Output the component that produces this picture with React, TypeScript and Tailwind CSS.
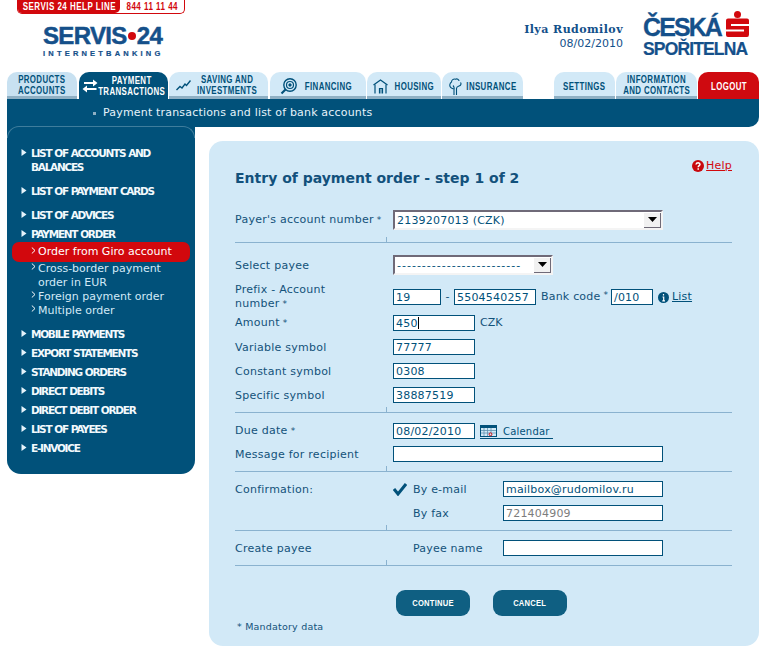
import React from "react";

const FONT = "font-['DejaVu_Sans',Verdana,sans-serif]";
const LOGO = "font-['Liberation_Sans',Arial,sans-serif]";

function Narrow({ w, children, className = "" }: { w: string; children: React.ReactNode; className?: string }) {
  return (
    <span className={`${w} flex justify-center shrink-0`}>
      <span className={`inline-block shrink-0 whitespace-nowrap scale-x-[0.75] ${LOGO} font-bold text-[10.5px] leading-[11px] tracking-[0.5px] text-center ${className}`}>{children}</span>
    </span>
  );
}

function Tab({ w, ml, pl, tw, children, active, red, light, icon, gap, single }: { w: string; ml?: string; pl?: string; tw: string; children: React.ReactNode; active?: boolean; red?: boolean; light?: boolean; icon?: React.ReactNode; gap?: string; single?: boolean }) {
  const bg = active
    ? "bg-[#01517a] text-white"
    : red
      ? "bg-[#cf0a10] text-white pt-[2px]"
      : `${light ? "bg-[#c8e1f1]" : "bg-[#d2e9f7]"} text-[#01517a] border-b-[3px] border-[#8fb0c4] ${single ? "pt-[4px]" : "pt-[2px]"}`;
  return (
    <div className={`${w} ${ml ?? ""} ${pl ?? ""} ${gap ?? ""} ${bg} h-[27px] rounded-t-[10px] flex items-center ${icon ? "" : "justify-center"} shrink-0`}>
      {icon}
      <Narrow w={tw}>{children}</Narrow>
    </div>
  );
}

const Arrow = () => (
  <svg width="6" height="7" viewBox="0 0 6 7" className="shrink-0 mt-[3px]"><path d="M0.5 0 L5.5 3.5 L0.5 7Z" fill="#e6f3fb" /></svg>
);

function MainItem({ children, mb = "mb-[5px]" }: { children: React.ReactNode; mb?: string }) {
  return (
    <div className={`flex gap-[4px] pl-[14px] ${mb}`}>
      <Arrow />
      <span className="text-[10.5px] leading-[14px] font-bold tracking-[-1.25px] [word-spacing:0.5px] text-[#f2f9fd] w-[145px]">{children}</span>
    </div>
  );
}

function SubItem({ children, active }: { children: React.ReactNode; active?: boolean }) {
  return (
    <div className={`flex pl-[19px] ml-[5px] mr-[5px] ${active ? "bg-[#d2080d] rounded-[7px] h-[20px] items-center text-white" : "text-[#d2e9f7]"}`}>
      <svg width="5" height="7" viewBox="0 0 5 7" className={`shrink-0 mr-[2px] ${active ? "-mt-[3px]" : "mt-[1px]"}`}><path d="M0.8 0.5 L4 3.5 L0.8 6.5" fill="none" stroke="white" /></svg>
      <span className="text-[11px] leading-[14px] w-[150px]">{children}</span>
    </div>
  );
}

function Field({ w, value, gray, caret }: { w: string; value?: string; gray?: boolean; caret?: boolean }) {
  return (
    <div className={`${w} h-[16px] border border-[#01517a] bg-white pl-[2px] pt-[2px] flex items-center text-[11px] leading-[12px] tracking-[0.2px] shrink-0 ${gray ? "text-[#7d7d7d]" : "text-[#01517a]"}`}>
      {value}
      {caret && <span className="w-px h-[12px] -mt-[2px] bg-black" />}
    </div>
  );
}

function Select({ w, value, track }: { w: string; value: string; track: string }) {
  return (
    <div className={`${w} h-[20px] bg-white border-2 border-t-[#6f6a78] border-l-[#6f6a78] border-r-[#f4f4f4] border-b-[#f4f4f4] flex items-center justify-between text-[11px] text-[#01517a] pl-[2px] shrink-0 overflow-hidden`}>
      <span className={`whitespace-nowrap pt-[2px] ${track}`}>{value}</span>
      <span className="w-[17px] h-[15px] bg-[#f1f1f1] border-r border-b border-[#6f6a78] flex items-center justify-center shrink-0">
        <svg width="9" height="5" viewBox="0 0 9 5"><path d="M0 0H9L4.5 5Z" fill="#000" /></svg>
      </span>
    </div>
  );
}

const Req = () => <span className="text-[9px] align-top"> *</span>;

function Row({ label, req, h = "h-[16px]", mt, children, drop }: { label: React.ReactNode; req?: boolean; h?: string; mt?: string; children?: React.ReactNode; drop?: boolean }) {
  return (
    <div className={`flex items-center ${h} ${mt ?? ""}`}>
      <div className={`w-[158px] shrink-0 text-[11px] leading-[14px] tracking-[0.25px] text-[#13527a] ${req && !drop ? "" : "pt-[2px]"}`}>
        {label}
        {req && <Req />}
      </div>
      {children}
    </div>
  );
}

function Rule({ mt }: { mt: string }) {
  return (
    <div className={`relative h-px bg-[#8ab2cf] ${mt}`}>
      <span className="absolute left-[151px] -top-[5px] w-px h-[5px] bg-[#8ab2cf]" />
    </div>
  );
}

function Btn({ children, ml }: { children: React.ReactNode; ml?: string }) {
  return (
    <div className={`w-[74px] h-[26px] rounded-[9px] bg-[#0f5f82] text-white flex items-center justify-center ${ml ?? ""}`}>
      <span className={`inline-block scale-x-[0.8] ${LOGO} font-bold text-[9.5px] tracking-[0.3px]`}>{children}</span>
    </div>
  );
}

const TransferIcon = () => (
  <svg width="16" height="14" viewBox="0 0 16 14" className="shrink-0 mt-[1px]"><path d="M2 3H11V0.5L15.5 4L11 7.5V5H2ZM14.5 9H5V6.5L0.5 10L5 13.5V11H14.5Z" fill="white" /></svg>
);
const ChartIcon = () => (
  <svg width="15" height="11" viewBox="0 0 15 11" className="shrink-0"><path d="M0.5 10L4 6.5L6 8L9 4L10.5 5.5L14.5 0.5" fill="none" stroke="#01517a" strokeWidth="1.4" /></svg>
);
const TargetIcon = () => (
  <svg width="17" height="17" viewBox="0 0 17 17" className="shrink-0" fill="none" stroke="#01517a"><circle cx="10" cy="7" r="6.2" strokeWidth="1.4" /><circle cx="10" cy="7" r="3.5" strokeWidth="1.2" /><circle cx="10" cy="7" r="1.2" fill="#01517a" /><path d="M5.5 11.5L1.5 15.5" strokeWidth="2.2" /></svg>
);
const HouseIcon = () => (
  <svg width="15" height="15" viewBox="0 0 15 15" className="shrink-0" fill="none" stroke="#01517a" strokeWidth="1.2"><path d="M0.5 6L7.5 1L14.5 6" /><path d="M2 5.5V14.5M13 5.5V14.5" /><path d="M6.5 14.5V9.5H9.5V14.5" /><path d="M8 9.5V14.5" strokeWidth="0.8" /></svg>
);
const TreeIcon = () => (
  <svg width="13" height="17" viewBox="0 0 13 17" className="shrink-0" fill="none" stroke="#01517a" strokeWidth="1.1"><path d="M5 17V11C2.5 11 0.5 9 0.8 6.8C1 5.5 1.5 4.5 2.5 4C2.5 2 4.5 0.5 6.5 1.2C8 0.3 10 1.5 10 3" /><path d="M7.5 17V10.5C7.5 9 8.5 8.5 10 8C12 7.5 12.5 5.5 11.5 4.5" /><path d="M5 11C5.5 9.5 5 8.5 4 7.5" /></svg>
);

const CalendarIcon = () => (
  <svg width="17" height="12" viewBox="0 0 17 12" className="shrink-0 mr-[6px]"><rect x="0.5" y="0.5" width="16" height="11" fill="#d2e9f7" stroke="#01517a" /><rect x="1" y="1" width="15" height="2" fill="#01517a" /><path d="M4 3V11M7.5 3V11M11 3V11M1 5.5H16M1 8H16" stroke="#5f93b0" strokeWidth="0.8" /><circle cx="10.5" cy="9.3" r="1.4" fill="#d2e9f7" stroke="#d2080d" /></svg>
);

export default function App() {
  return (
    <div className={`w-[770px] h-[658px] bg-white overflow-hidden ${FONT}`}>
      {/* Header */}
      <div className="h-[72px] flex">
        <div className="w-[372px] pl-[17px] shrink-0">
          <div className="w-[168px] h-[14px] border border-[#d2080d] border-t-0 rounded-b-[5px] flex overflow-hidden">
            <span className="bg-[#d2080d] text-white w-[102px] rounded-br-[5px] flex justify-center items-center">
              <span className={`inline-block shrink-0 whitespace-nowrap scale-x-[0.8] ${LOGO} font-bold text-[10px] leading-[13px] tracking-[0.6px]`}>SERVIS 24 HELP LINE</span>
            </span>
            <span className="text-[#d2080d] w-[64px] flex justify-center items-center">
              <span className={`inline-block shrink-0 whitespace-nowrap scale-x-[0.8] ${LOGO} font-bold text-[10px] leading-[13px] tracking-[0.6px]`}>844 11 11 44</span>
            </span>
          </div>
          <div className="pl-[26px] pt-[11px]">
            <div className={`text-[#15508a] ${LOGO} font-bold text-[24px] leading-[22px] tracking-[-0.65px] [-webkit-text-stroke:0.5px_#15508a] flex items-center whitespace-nowrap`}>
              SERVIS<span className="w-[8px] h-[8px] rounded-full bg-[#d2080d] mx-[1px]" />24
            </div>
            <div className={`text-[#15508a] ${LOGO} font-bold text-[7.5px] leading-[8px] tracking-[3.2px] [-webkit-text-stroke:0.2px_#15508a] mt-[3px] whitespace-nowrap`}>INTERNETBANKING</div>
          </div>
        </div>
        <div className="flex-1 flex justify-end pt-[23px]">
          <div className="text-right text-[#12508a] text-[11px] leading-[14px]">
            <div className="font-['DejaVu_Serif',serif] font-bold text-[11px] tracking-[0.45px]">Ilya Rudomilov</div>
            <div>08/02/2010</div>
          </div>
        </div>
        <div className="w-[147px] pl-[20px] pt-[13px] shrink-0">
          <div className="flex items-start">
            <span className={`text-[#15508a] ${LOGO} font-bold text-[25px] leading-[28px] tracking-[-1.9px] [-webkit-text-stroke:0.3px_#15508a]`}>ČESKÁ</span>
            <svg width="23" height="27" viewBox="0 0 23 27" className="ml-[5px] -mt-[2px] shrink-0"><circle cx="11.5" cy="3.5" r="3.5" fill="#d2080d" /><path d="M0 9.5Q0 7.5 2 7.5H21Q23 7.5 23 9.5V13H5V15H23V23.5Q23 26 21 26H2Q0 26 0 24V20.5H18V18.5H0Z" fill="#d2080d" /></svg>
          </div>
          <div className={`text-[#15508a] ${LOGO} font-bold text-[17.5px] leading-[18px] -mt-[1px] tracking-[-0.85px] [-webkit-text-stroke:0.2px_#15508a] whitespace-nowrap`}>SPOŘITELNA</div>
        </div>
      </div>

      {/* Tabs */}
      <div className="flex pl-[7px]">
        <Tab w="w-[70px]" tw="w-[46px]" light>PRODUCTS<br />ACCOUNTS</Tab>
        <Tab w="w-[89px]" ml="ml-[2px]" pl="pl-[3px]" gap="gap-[1px]" tw="w-[66px]" active icon={<TransferIcon />}>PAYMENT<br />TRANSACTIONS</Tab>
        <Tab w="w-[99px]" ml="ml-[1px]" pl="pl-[7px]" gap="gap-[6px]" tw="w-[61px]" icon={<ChartIcon />}>SAVING AND<br />INVESTMENTS</Tab>
        <Tab w="w-[96px]" ml="ml-[2px]" pl="pl-[10px]" gap="gap-[8px]" tw="w-[47px]" single icon={<TargetIcon />}>FINANCING</Tab>
        <Tab w="w-[74px]" ml="ml-[1px]" pl="pl-[6px]" gap="gap-[6px]" tw="w-[41px]" single icon={<HouseIcon />}>HOUSING</Tab>
        <Tab w="w-[81px]" ml="ml-[1px]" pl="pl-[7px]" gap="gap-[4px]" tw="w-[51px]" single icon={<TreeIcon />}>INSURANCE</Tab>
        <Tab w="w-[61px]" ml="ml-[31px]" tw="w-[42px]" single>SETTINGS</Tab>
        <Tab w="w-[81px]" ml="ml-[1px]" tw="w-[64px]">INFORMATION<br />AND CONTACTS</Tab>
        <Tab w="w-[61px]" ml="ml-[1px]" tw="w-[34px]" red>LOGOUT</Tab>
      </div>

      {/* Sub bar */}
      <div className="ml-[7px] w-[752px] h-[28px] bg-[#01517a] rounded-br-[10px] flex items-center pl-[86px] pt-[1px] text-[11px] tracking-[0.18px] text-[#e6f3fb] gap-[7px]">
        <span className="w-[3px] h-[3px] bg-[#8fb0c4]" />
        Payment transactions and list of bank accounts
      </div>

      <div className="flex pl-[7px] items-start">
        {/* Sidebar */}
        <div className="relative w-[188px] h-[348px] -mt-[1px] bg-[#01517a] rounded-b-[14px] pt-[20px] shrink-0">
          <span className="absolute inset-x-0 top-0 h-[12px] rounded-t-[12px] border-t border-x border-[#3f7d9c]" />
          <MainItem mb="mb-[10px]">LIST OF ACCOUNTS AND BALANCES</MainItem>
          <MainItem mb="mb-[10px]">LIST OF PAYMENT CARDS</MainItem>
          <MainItem mb="mb-[5px]">LIST OF ADVICES</MainItem>
          <MainItem mb="mb-[1px]">PAYMENT ORDER</MainItem>
          <SubItem active>Order from Giro account</SubItem>
          <SubItem>Cross-border payment order in EUR</SubItem>
          <SubItem>Foreign payment order</SubItem>
          <SubItem>Multiple order</SubItem>
          <div className="mt-[9px]" />
          <MainItem>MOBILE PAYMENTS</MainItem>
          <MainItem>EXPORT STATEMENTS</MainItem>
          <MainItem>STANDING ORDERS</MainItem>
          <MainItem>DIRECT DEBITS</MainItem>
          <MainItem>DIRECT DEBIT ORDER</MainItem>
          <MainItem>LIST OF PAYEES</MainItem>
          <MainItem>E-INVOICE</MainItem>
        </div>

        {/* Main panel */}
        <div className="relative ml-[14px] mt-[14px] w-[550px] h-[505px] bg-[#d2e9f7] rounded-[14px] pl-[26px] pr-[27px] pt-[28px]">
          <a className="absolute right-[27px] top-[18px] flex items-center gap-[2px] text-[11px] leading-[14px] tracking-[0.2px] text-[#d2080d] underline">
            <svg width="12" height="12" viewBox="0 0 12 12"><circle cx="6" cy="6" r="6" fill="#c8080d" /><path d="M4 4.5Q4.3 2.7 6.2 2.7Q8 2.8 8 4.3C8 5.6 6.2 5.7 6.2 7.3M6.2 8.2V9.7" fill="none" stroke="white" strokeWidth="1.5" /></svg>
            Help
          </a>
          <h1 className="text-[14px] leading-[18px] font-bold text-[#12517c]">Entry of payment order - step 1 of 2</h1>

          <Row label="Payer's account number" req h="h-[20px]" mt="mt-[23px]"><Select w="w-[270px]" track="tracking-[0.2px]" value="2139207013 (CZK)" /></Row>
          <Rule mt="mt-[12px]" />
          <Row label="Select payee" h="h-[20px]" mt="mt-[12px]"><Select w="w-[160px]" track="tracking-[1px]" value="-------------------------" /></Row>
          <Row label={<>Prefix - Account<br />number</>} req drop h="h-[28px]" mt="mt-[7px]">
            <div className="flex items-center mt-[2px]">
              <Field w="w-[48px]" value="19" />
              <span className="w-[13px] text-center text-[11px] text-[#13527a]">-</span>
              <Field w="w-[82px]" value="5504540257" />
              <span className="ml-[5px] w-[70px] text-[11px] tracking-[0.2px] text-[#13527a] whitespace-nowrap">Bank code<Req /></span>
              <Field w="w-[42px]" value="/010" />
              <a className="ml-[5px] flex items-center gap-[3px] text-[11px] tracking-[0.2px] text-[#01517a] underline">
                <svg width="11" height="11" viewBox="0 0 11 11"><circle cx="5.5" cy="5.5" r="5.5" fill="#01517a" /><path d="M5.5 2V3.5M4.5 5H5.7V8.5M4.3 8.8H7" stroke="white" strokeWidth="1.2" fill="none" /></svg>
                List
              </a>
            </div>
          </Row>
          <Row label="Amount" req mt="mt-[5px]">
            <Field w="w-[82px]" value="450" caret />
            <span className="ml-[5px] text-[11px] text-[#13527a]">CZK</span>
          </Row>
          <Row label="Variable symbol" mt="mt-[8px]"><Field w="w-[82px]" value="77777" /></Row>
          <Row label="Constant symbol" mt="mt-[8px]"><Field w="w-[82px]" value="0308" /></Row>
          <Row label="Specific symbol" mt="mt-[8px]"><Field w="w-[82px]" value="38887519" /></Row>
          <Rule mt="mt-[9px]" />
          <Row label="Due date" req mt="mt-[10px]">
            <Field w="w-[82px]" value="08/02/2010" />
            <a className="ml-[5px] flex items-center h-[14px] text-[10px] tracking-[0.2px] text-[#01517a] border-b border-[#01517a] pr-[3px] mt-[1px]">
              <CalendarIcon />
              Calendar
            </a>
          </Row>
          <Row label="Message for recipient" mt="mt-[7px]"><Field w="w-[270px]" /></Row>
          <Rule mt="mt-[9px]" />
          <Row label="Confirmation:" mt="mt-[9px]">
            <svg width="14" height="13" viewBox="0 0 14 13" className="shrink-0"><path d="M1 6L5 11L13 1" fill="none" stroke="#01517a" strokeWidth="3" /></svg>
            <span className="w-[96px] pl-[6px] pt-[2px] text-[11px] tracking-[0.2px] text-[#13527a]">By e-mail</span>
            <Field w="w-[160px]" value="mailbox@rudomilov.ru" />
          </Row>
          <Row label="" mt="mt-[8px]">
            <span className="w-[14px]" />
            <span className="w-[96px] pl-[6px] pt-[2px] text-[11px] tracking-[0.2px] text-[#13527a]">By fax</span>
            <Field w="w-[160px]" value="721404909" gray />
          </Row>
          <Rule mt="mt-[9px]" />
          <Row label="Create payee" mt="mt-[9px]">
            <span className="w-[110px] pl-[20px] pt-[2px] text-[11px] tracking-[0.2px] text-[#13527a]">Payee name</span>
            <Field w="w-[160px]" />
          </Row>
          <Rule mt="mt-[9px]" />
          <div className="flex mt-[24px] pl-[161px]">
            <Btn>CONTINUE</Btn>
            <Btn ml="ml-[23px]">CANCEL</Btn>
          </div>
          <div className="mt-[5px] text-[9.5px] leading-[12px] tracking-[0.2px] text-[#13527a] pl-[2px]">* Mandatory data</div>
        </div>
      </div>
    </div>
  );
}
